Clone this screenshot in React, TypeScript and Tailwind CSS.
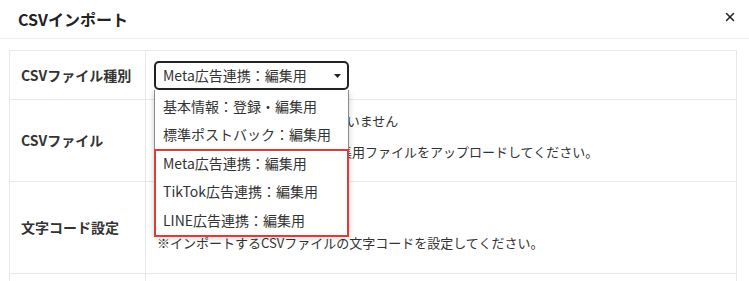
import { X } from 'lucide-react'

const options = [
  '基本情報：登録・編集用',
  '標準ポストバック：編集用',
  'Meta広告連携：編集用',
  'TikTok広告連携：編集用',
  'LINE広告連携：編集用',
]

function Caret() {
  return (
    <svg width="7" height="4" viewBox="0 0 7 4" className="shrink-0">
      <path d="M0 0 L7 0 L3.5 4 Z" fill="#222" />
    </svg>
  )
}

export default function App() {
  return (
    <div
      className="w-[749px] h-[281px] overflow-hidden bg-white text-[#333]"
      style={{ fontFamily: '"Noto Sans CJK JP", "Noto Sans", sans-serif' }}
    >
      {/* header */}
      <div className="h-[39px] flex items-center justify-between pl-[18px] pr-[12px] border-b border-[#eeeeee]">
        <h1 className="text-[16px] font-bold text-[#222]">CSVインポート</h1>
        <X className="w-[14px] h-[14px] text-[#222] -mt-[4px]" strokeWidth={2.5} />
      </div>

      {/* form table */}
      <div className="pt-[11px] pl-[9px] pr-[12px]">
        <div className="border border-[#e8e8e8]">
          {/* row 1 */}
          <div className="grid grid-cols-[136px_1fr] h-[49px] border-b border-[#e8e8e8]">
            <div className="flex items-center pl-[11px] border-r border-[#e8e8e8] text-[14px] font-bold">
              CSVファイル種別
            </div>
            <div className="relative pl-[8px] pt-[10px]">
              <div className="relative w-[195px]">
                <div className="h-[29px] border-2 border-[#222] rounded-[5px] flex items-center justify-between pl-[7px] pr-[6px] text-[14px]">
                  <span>Meta広告連携：編集用</span>
                  <Caret />
                </div>

                {/* open dropdown */}
                <div className="absolute left-0 top-[29px] w-[195px] z-10 bg-white border border-[#8a8a8a] border-t-0 shadow-[0_2px_6px_rgba(0,0,0,0.2)] pt-[2px]">
                  {options.map((o) => (
                    <div key={o} className="h-[28.5px] flex items-center pl-[8px] text-[14px] whitespace-nowrap">
                      {o}
                    </div>
                  ))}
                  {/* highlight annotation */}
                  <div className="absolute left-[-1px] right-[-1px] top-[59px] h-[88px] border-2 border-[#e53935]" />
                </div>
              </div>
            </div>
          </div>

          {/* row 2 */}
          <div className="grid grid-cols-[136px_1fr] h-[82px] border-b border-[#e8e8e8]">
            <div className="flex items-center pl-[11px] border-r border-[#e8e8e8] text-[14px] font-bold">
              CSVファイル
            </div>
            <div className="flex flex-col gap-[10px] pl-[11px] pt-[10px] text-[13px]">
              <div className="h-[22px] flex items-center gap-[12px]">
                <span className="px-[10px] py-[1px] border border-[#999] rounded-[3px] bg-[#f0f0f0]">ファイルを選択</span>
                <span>選択されていません</span>
              </div>
              <div className="leading-[19px]">※上記で選択した種別に合う編集用ファイルをアップロードしてください。</div>
            </div>
          </div>

          {/* row 3 */}
          <div className="grid grid-cols-[136px_1fr] h-[92px] border-b border-[#e8e8e8]">
            <div className="flex items-center pl-[11px] border-r border-[#e8e8e8] text-[14px] font-bold">
              文字コード設定
            </div>
            <div className="flex flex-col gap-[13px] pl-[11px] pt-[10px] text-[13px]">
              <div className="w-[120px] h-[28px] border border-[#999] rounded-[4px] flex items-center px-[6px]">
                Shift_JIS
              </div>
              <div className="leading-[19px]">※インポートするCSVファイルの文字コードを設定してください。</div>
            </div>
          </div>

          {/* row 4 */}
          <div className="grid grid-cols-[136px_1fr] h-[40px]">
            <div className="border-r border-[#e8e8e8]" />
            <div />
          </div>
        </div>
      </div>
    </div>
  )
}
